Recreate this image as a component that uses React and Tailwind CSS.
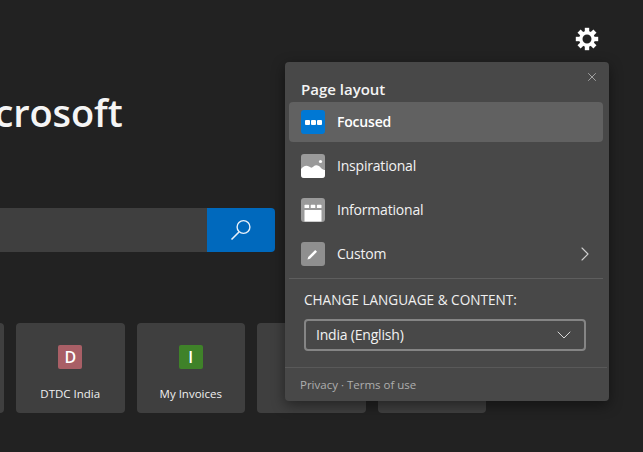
import { ChevronDown, ChevronRight, X } from "lucide-react";

const font = { fontFamily: '"Open Sans", "Noto Sans", sans-serif' };

function Gear() {
  const teeth = [0, 45, 90, 135, 180, 225, 270, 315];
  return (
    <svg width="24" height="24" viewBox="0 0 24 24" className="text-white">
      {teeth.map((a) => (
        <rect key={a} x="9.8" y="0.8" width="4.4" height="5" fill="currentColor" transform={`rotate(${a} 12 12)`} />
      ))}
      <circle cx="12" cy="12" r="6.2" fill="none" stroke="currentColor" strokeWidth="3.4" />
    </svg>
  );
}

function SearchIcon() {
  return (
    <svg width="22" height="22" viewBox="0 0 22 22" fill="none" stroke="#e8f1fa" strokeWidth="1.4">
      <circle cx="13.5" cy="8" r="6.4" />
      <path d="M9 13 L1.5 20.5" strokeWidth="1.6" />
    </svg>
  );
}

function Tile({ letter, color, label }) {
  return (
    <div className="flex h-[90px] w-[108.5px] shrink-0 flex-col items-center rounded bg-[#3f3f3f] pt-[22px]">
      {letter && (
        <>
          <div className={`flex h-6 w-6 items-center justify-center rounded-[2px] text-[16px] font-semibold text-white ${color}`}>
            {letter}
          </div>
          <div className="mt-[15px] text-[11.5px] leading-[20px] text-[#f0f0f0]">{label}</div>
        </>
      )}
    </div>
  );
}

function LayoutIcon({ kind }) {
  if (kind === "focused") {
    return (
      <div className="flex h-6 w-6 items-center justify-center gap-px rounded-[3px] bg-[#0078d4]">
        <span className="h-[5px] w-[5px] rounded-[1px] bg-white" />
        <span className="h-[5px] w-[5px] rounded-[1px] bg-white" />
        <span className="h-[5px] w-[5px] rounded-[1px] bg-white" />
      </div>
    );
  }
  if (kind === "inspirational") {
    return (
      <svg width="24" height="24" viewBox="0 0 24 24">
        <rect width="24" height="24" rx="3" fill="#9a9a9a" />
        <circle cx="19.5" cy="7.5" r="1.6" fill="#fff" />
        <path d="M0 15 C2 12.5 5 10.5 8 12.5 C10 14 11 14 12.5 12.5 C14.5 10.5 18 11 20 14 C21.5 15.5 23 16 24 16 V21 A3 3 0 0 1 21 24 H3 A3 3 0 0 1 0 21 Z" fill="#fff" />
      </svg>
    );
  }
  if (kind === "informational") {
    return (
      <svg width="24" height="24" viewBox="0 0 24 24">
        <rect width="24" height="24" rx="3" fill="#9a9a9a" />
        <rect x="3.5" y="6.8" width="4.6" height="3.2" rx="0.6" fill="#fff" />
        <rect x="9.7" y="6.8" width="4.6" height="3.2" rx="0.6" fill="#fff" />
        <rect x="15.9" y="6.8" width="4.6" height="3.2" rx="0.6" fill="#fff" />
        <rect x="3.5" y="12" width="17" height="11.5" rx="0.6" fill="#fff" />
      </svg>
    );
  }
  return (
    <svg width="24" height="24" viewBox="0 0 24 24">
      <rect width="24" height="24" rx="3" fill="#8f8f8f" />
      <path d="M6.5 17.5 L7.2 15 L14.2 8 L16 9.8 L9 16.8 Z" fill="#fff" />
    </svg>
  );
}

function LayoutRow({ kind, label, active, arrow }) {
  return (
    <div className={`flex h-10 items-center rounded-sm pl-3 pr-[6px] text-[14px] tracking-[-0.2px] ${active ? "bg-[#616161] font-semibold text-white" : "text-[#f2f2f2]"}`}>
      <LayoutIcon kind={kind} />
      <span className="ml-3 flex-1 pb-[2px]">{label}</span>
      {arrow && <ChevronRight size={24} strokeWidth={1.1} className="text-[#cfcfcf]" />}
    </div>
  );
}

function SettingsPanel() {
  return (
    <div className="absolute left-[285px] top-[62px] h-[339px] w-[324px] rounded bg-[#484848] shadow-[0_4px_14px_rgba(0,0,0,0.45)]">
      <button className="absolute right-[10px] top-[8px] text-[#c8c8c8]">
        <X size={14} strokeWidth={1.2} />
      </button>
      <h2 className="pl-4 pt-[17px] text-[15px] font-semibold leading-[21px] text-[#f4f4f4]">Page layout</h2>
      <div className="mx-1 mt-[2px] flex w-[314px] flex-col gap-1">
        <LayoutRow kind="focused" label="Focused" active />
        <LayoutRow kind="inspirational" label="Inspirational" />
        <LayoutRow kind="informational" label="Informational" />
        <LayoutRow kind="custom" label="Custom" arrow />
      </div>
      <div className="mx-1 mt-1 w-[314px] border-t border-[#5e5e5e]" />
      <div className="pl-[19px] pt-[11px] text-[13.6px] leading-[20px] text-[#f0f0f0]">CHANGE LANGUAGE &amp; CONTENT:</div>
      <div className="ml-[19px] mt-[9px] flex h-8 w-[282px] items-center justify-between rounded-sm border-2 border-[#858585] pl-[10px] pr-[8px] text-[14px] tracking-[-0.2px] text-[#f2f2f2]">
        <span className="pb-[1px]">India (English)</span>
        <ChevronDown size={24} strokeWidth={1} className="text-[#d8d8d8]" />
      </div>
      <div className="mt-4 w-[322px] border-t border-[#595959]" />
      <div className="pl-[15px] pt-[7px] text-[11.5px] leading-[20px] text-[#aeaeae]">Privacy · Terms of use</div>
    </div>
  );
}

export default function App() {
  return (
    <div className="relative h-[452px] w-[643px] overflow-hidden bg-[#222222]" style={font}>
      <div className="flex justify-end pr-[44px] pt-[27px]">
        <Gear />
      </div>
      <h1 className="-ml-[51px] mt-[33px] text-[38px] font-semibold leading-[56px] tracking-[-0.1px] text-[#f5f5f5]">Microsoft</h1>
      <div className="mt-[68px] flex h-11 w-[275px]">
        <div className="flex-1 bg-[#3f3f3f]" />
        <div className="flex w-[68px] items-center justify-center rounded-r bg-[#0069bd]">
          <SearchIcon />
        </div>
      </div>
      <div className="-ml-[104.5px] mt-[71px] flex gap-3">
        <Tile />
        <Tile letter="D" color="bg-[#a95f66]" label="DTDC India" />
        <Tile letter="I" color="bg-[#3f8229]" label="My Invoices" />
        <Tile />
        <Tile />
      </div>
      <SettingsPanel />
    </div>
  );
}
